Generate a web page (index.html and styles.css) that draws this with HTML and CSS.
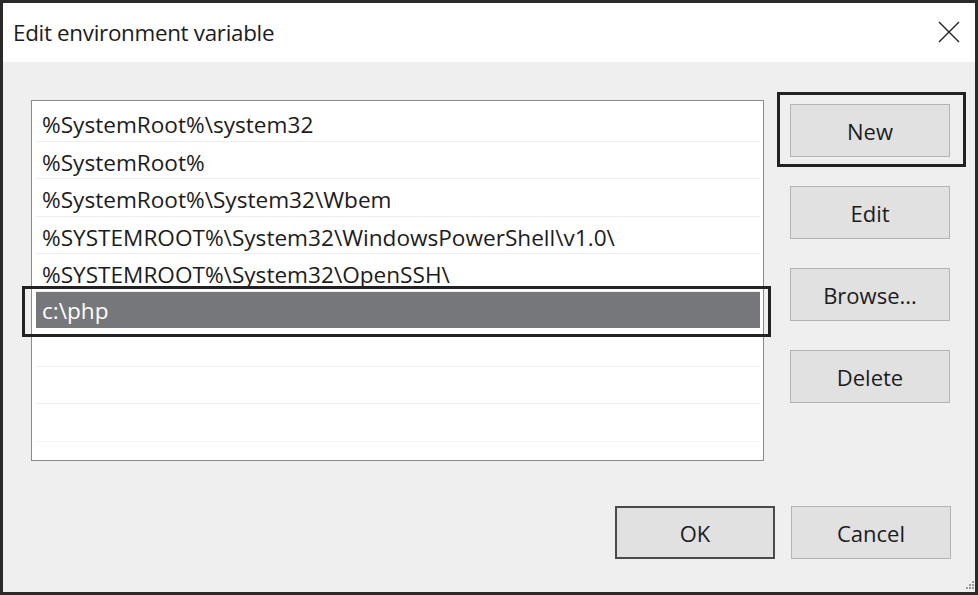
FILE: index.html
```html
<!DOCTYPE html>
<html>
<head>
<meta charset="utf-8">
<title>Edit environment variable</title>
<link rel="stylesheet" href="styles.css">
</head>
<body>
<div class="window">
  <div class="titlebar">
    <span class="title">Edit environment variable</span>
    <svg class="close" width="22" height="22" viewBox="0 0 22 22"><path d="M1 1 L21 21 M21 1 L1 21" stroke="#222" stroke-width="1.4" fill="none"/></svg>
  </div>
  <div class="content">
    <div class="main">
      <div class="list">
        <div class="row">%SystemRoot%\system32</div>
        <div class="row">%SystemRoot%</div>
        <div class="row">%SystemRoot%\System32\Wbem</div>
        <div class="row">%SYSTEMROOT%\System32\WindowsPowerShell\v1.0\</div>
        <div class="row">%SYSTEMROOT%\System32\OpenSSH\</div>
        <div class="row selected">c:\php</div>
        <div class="row empty"></div>
        <div class="row empty"></div>
        <div class="row empty last"></div>
      </div>
      <div class="side">
        <button class="btn marked">New</button>
        <button class="btn">Edit</button>
        <button class="btn">Browse...</button>
        <button class="btn">Delete</button>
      </div>
    </div>
    <div class="footer">
      <button class="btn default">OK</button>
      <button class="btn">Cancel</button>
    </div>
  </div>
  <svg class="grip" width="10" height="10" viewBox="0 0 10 10"><g fill="#9a9a9a"><rect x="8" y="0" width="2" height="2"/><rect x="5" y="3" width="2" height="2"/><rect x="8" y="3" width="2" height="2"/><rect x="2" y="6" width="2" height="2"/><rect x="5" y="6" width="2" height="2"/><rect x="8" y="6" width="2" height="2"/></g></svg>
</div>
</body>
</html>
```
FILE: styles.css
```css
* { box-sizing: border-box; }
html, body { margin: 0; padding: 0; background: #f0f0f0; }
body { font-family: "Open Sans", "Noto Sans", sans-serif; color: #1c1c1c; }

.window {
  position: relative;
  width: 978px;
  height: 595px;
  border: 3px solid #2a2a2a;
  background: #efefef;
  display: flex;
  flex-direction: column;
}

.titlebar {
  height: 59px;
  background: #ffffff;
  display: flex;
  align-items: center;
  justify-content: space-between;
  padding: 0 15px 0 10px;
  flex: none;
}
.title { font-size: 22.4px; letter-spacing: -0.3px; margin-top: -1px; }
.close { display: block; margin-top: -1px; }

.content {
  flex: 1;
  display: flex;
  flex-direction: column;
  padding: 38px 24px 0 28px;
}

.main { display: flex; gap: 26px; }

.list {
  width: 733px;
  height: 361px;
  background: #ffffff;
  border: 1px solid #8a8a8a;
  padding-top: 3px;
}
.row {
  position: relative;
  height: 37.5px;
  margin: 0 3px 0 4px;
  padding-left: 6px;
  font-size: 22.6px;
  line-height: 42px;
  border-bottom: 1px solid #efefef;
  white-space: nowrap;
}
.row.last { border-bottom-color: #f4f4f4; }
.row.selected {
  background: #76777b;
  color: #ffffff;
  border-bottom-color: #ffffff;
  line-height: 38px;
}
.row.selected::after {
  content: "";
  position: absolute;
  left: -14px;
  right: -11px;
  top: -6px;
  bottom: -9px;
  border: 3px solid #222222;
}

.side {
  display: flex;
  flex-direction: column;
  gap: 29px;
  padding-top: 4px;
}

.btn {
  position: relative;
  width: 160px;
  height: 53px;
  background: #e1e1e1;
  border: 1px solid #b4b4b4;
  font-family: inherit;
  font-size: 22px;
  color: #1c1c1c;
  padding: 0;
}
.btn.marked::after {
  content: "";
  position: absolute;
  left: -14px;
  right: -17px;
  top: -13px;
  bottom: -11px;
  border: 3px solid #222222;
}
.btn.default { border: 2px solid #4a4a4a; }

.footer {
  display: flex;
  justify-content: flex-end;
  gap: 16px;
  margin-top: 45px;
}

.grip { position: absolute; right: 1px; bottom: 1px; }
```
